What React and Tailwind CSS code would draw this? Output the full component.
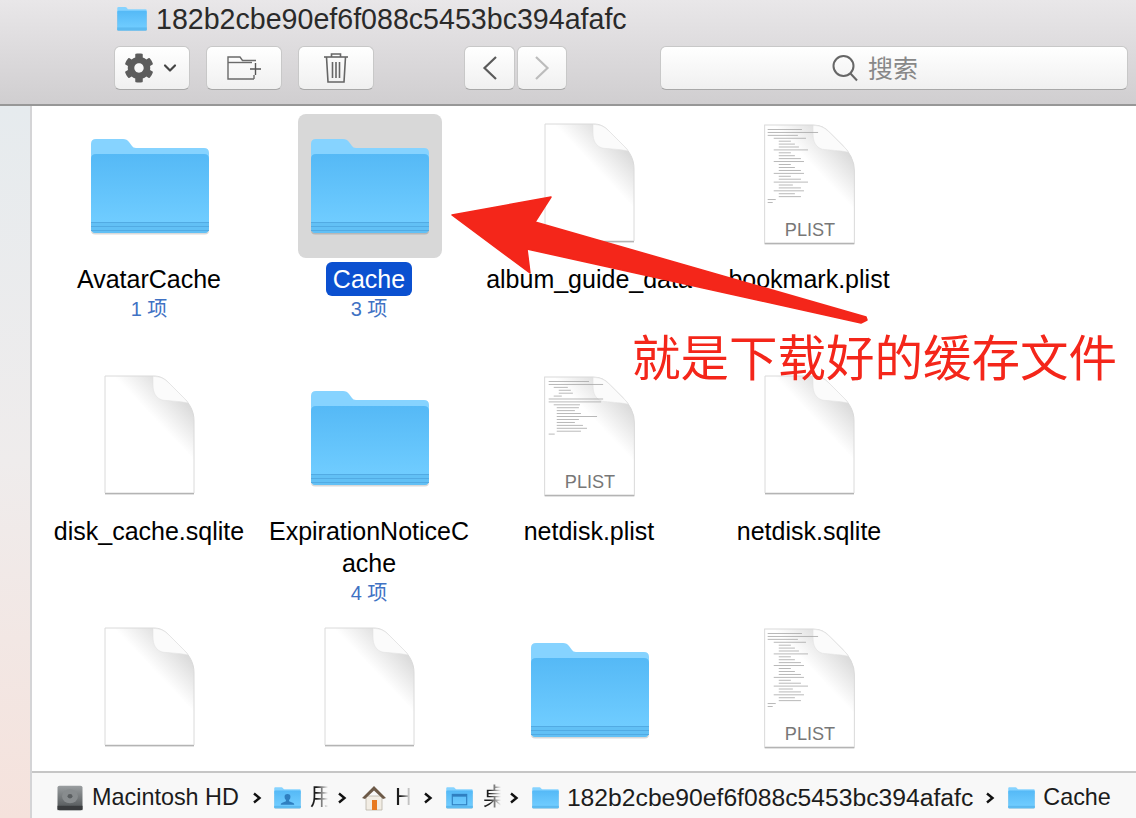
import { ChevronDown } from "lucide-react";
import { FaCog } from "react-icons/fa";

const font = { fontFamily: '"Liberation Sans", "Noto Sans CJK SC", sans-serif' };

const items = [
  { type: "folder", label: "AvatarCache", count: "1 项" },
  { type: "folder", label: "Cache", count: "3 项", selected: true },
  { type: "file", label: "album_guide_data" },
  { type: "plist", label: "bookmark.plist", pattern: 0 },
  { type: "file", label: "disk_cache.sqlite" },
  { type: "folder", label: "ExpirationNoticeCache", count: "4 项" },
  { type: "plist", label: "netdisk.plist", pattern: 1 },
  { type: "file", label: "netdisk.sqlite" },
  { type: "file", label: "" },
  { type: "file", label: "" },
  { type: "folder", label: "" },
  { type: "plist", label: "", pattern: 0 },
];

function FolderIcon({ width = 120, height = 96, glyph }) {
  return (
    <svg width={width} height={height} viewBox="0 0 120 96" className="block shrink-0">
      <defs>
        <linearGradient id="folderFront" x1="0" y1="0" x2="0" y2="1">
          <stop offset="0" stopColor="#55b9f6" />
          <stop offset="0.85" stopColor="#6fccff" />
        </linearGradient>
      </defs>
      <rect x="1" y="30" width="118" height="65.500" rx="4" fill="#000" opacity="0.15" />
      <path d="M1 5 Q1 0 6 0 H33 Q37 0 39 3 L42 7 Q43 9 46 9 H114 Q119 9 119 14 V30 H1 Z" fill="#86d3ff" />
      <path d="M1 20 Q1 15 6 15 H114 Q119 15 119 20 V89 Q119 94 114 94 H6 Q1 94 1 89 Z" fill="url(#folderFront)" />
      <path d="M1 83 H119 V89 Q119 94 114 94 H6 Q1 94 1 89 Z" fill="#62c0f5" />
      <rect x="1" y="83" width="118" height="1" fill="#52abe3" />
      <rect x="1" y="87" width="118" height="1" fill="#52abe3" />
      <rect x="1" y="91" width="118" height="1" fill="#52abe3" />
      {glyph === "user" && (
        <path d="M60 30 a13 13 0 0 1 13 14 q0 9 -6 13 v5 l19 8 q4 2 4 8 H30 q0 -6 4 -8 l19 -8 v-5 q-6 -4 -6 -13 a13 13 0 0 1 13 -14 Z" fill="#2f7fc0" />
      )}
      {glyph === "desktop" && (
        <>
          <rect x="28" y="32" width="64" height="46" fill="none" stroke="#2f7fc0" strokeWidth="5" />
          <rect x="28" y="32" width="64" height="10" fill="#2f7fc0" />
        </>
      )}
    </svg>
  );
}

const plistLines = [
  [[4, 34], [4, 50], [4, 30], [10, 32], [15, 12], [15, 16], [15, 20], [10, 34], [15, 12], [15, 16], [15, 22], [10, 30], [15, 12], [15, 16], [15, 22], [10, 30], [15, 12], [15, 22], [10, 34], [15, 14], [15, 22], [10, 30], [15, 16], [15, 22], [4, 8], [4, 5]],
  [[5, 40], [5, 54], [10, 14], [15, 12], [15, 14], [10, 8], [5, 54], [5, 52], [10, 26], [13, 22], [13, 18], [13, 24], [13, 40], [13, 22], [13, 18], [13, 26], [13, 30], [13, 24], [5, 6]],
];

function FileIcon({ plist, pattern = 0 }) {
  return (
    <svg width={plist ? 96 : 94} height={plist ? 123 : 122} viewBox="-2 -1 94 122" className="block">
      <defs>
        <linearGradient id="pageShade" x1="0.8" y1="0.15" x2="0.6" y2="0.4">
          <stop offset="0" stopColor="#dcdcdc" />
          <stop offset="1" stopColor="#ffffff" />
        </linearGradient>
      </defs>
      <path
        d="M1 1 H49 C56 1 60 3 66 9 L78 21 C86 29 90 36 90 46 V118 H1 Z"
        fill="url(#pageShade)"
        stroke="#dadada"
        strokeWidth="1"
      />
      <rect x="1" y="118" width="89" height="1.400" fill="#b4b4b4" />
      <path d="M49 1.500 C56 1.500 60 3 66 9 L78 21 C81 24 83 26 84 28 C75 26 64 26 58 25 C52 23 49 18 49 10 Z" fill="#fbfbfb" stroke="#e2e2e2" strokeWidth="0.600" />
      {plist && (
        <>
          {plistLines[pattern].map(([x, len], i) => (
            <rect key={i} x={x} y={5 + i * 2.900} width={len} height="0.800" fill="#a8a8a8" />
          ))}
          <text x="46" y="111" textAnchor="middle" fontSize="18" fill="#777" style={font}>PLIST</text>
        </>
      )}
    </svg>
  );
}

function GridItem({ item }) {
  return (
    <div className="h-[252px] w-[220px] flex flex-col items-center">
      <div className={`w-[144px] h-[144px] flex items-center justify-center rounded-lg ${item.selected ? "bg-[#d8d8d8]" : ""}`}>
        {item.type === "folder" && <div className="pt-[2px]"><FolderIcon /></div>}
        {item.type === "file" && <div className="pb-[6px] pr-[2px]"><FileIcon /></div>}
        {item.type === "plist" && <div className="pb-[4px] pr-[2px]"><FileIcon plist pattern={item.pattern} /></div>}
      </div>
      {item.label && (
        <div className="mt-[4px] w-[210px] flex justify-center text-center pr-[2px]">
          <span className={`text-[25px] leading-[32px] py-px rounded-md break-all ${item.selected ? "bg-[#0b50d0] text-white px-[7px]" : "text-black"}`}>
            {item.label}
          </span>
        </div>
      )}
      {item.count && <div className="text-[20px] leading-[24px] mt-px pr-[2px] text-[#3f72c4]">{item.count}</div>}
    </div>
  );
}

function ToolButton({ className, children }) {
  return (
    <div className={`h-[44px] flex items-center justify-center rounded-md border border-[#c8c8c8] border-b-[#a8a8a8] bg-linear-to-b from-white to-[#f0f0f0] ${className}`}>
      {children}
    </div>
  );
}

function Crumb() {
  return (
    <svg width="10" height="14" viewBox="0 0 10 14" className="shrink-0 block">
      <path d="M2 2.500 L7.500 7 L2 11.500" fill="none" stroke="#111" strokeWidth="2.400" />
    </svg>
  );
}

export default function App() {
  return (
    <div className="w-[1136px] h-[818px] overflow-hidden flex flex-col bg-white" style={font}>
      {/* toolbar */}
      <div className="h-[106px] shrink-0 border-b-2 border-[#979797] bg-linear-to-b from-[#e9e7e9] to-[#d0ced0]">
        <div className="h-[46px] pl-[117px] flex items-center gap-[9px] pb-[8px]">
          <FolderIcon width={30} height={24} />
          <span className="text-[28.600px] text-[#2a2a2a] leading-none">182b2cbe90ef6f088c5453bc394afafc</span>
        </div>
        <div className="flex pl-[114px]">
          <ToolButton className="w-[76px] gap-[6px]">
            <FaCog size={30} color="#5c5c5c" />
            <ChevronDown size={20} strokeWidth={2.600} color="#444" />
          </ToolButton>
          <ToolButton className="w-[76px] ml-[16px]">
            <svg width="36" height="28" viewBox="0 0 36 28" fill="none" stroke="#6a6a6a" strokeWidth="1.400">
              <path d="M28 25 H2 V3 H14 L16.500 6.500 H30" />
              <path d="M2 8.500 H26" />
              <path d="M29.500 9 V21 M24 15 H35" stroke="#555" />
              <path d="M28 21 V25" />
            </svg>
          </ToolButton>
          <ToolButton className="w-[76px] ml-[16px]">
            <svg width="26" height="32" viewBox="0 0 26 32" fill="none" stroke="#666" strokeWidth="1.600">
              <path d="M1 5 H25" />
              <path d="M8.500 5 V2 H17.500 V5" />
              <path d="M3.500 5 L5 30 H21 L22.500 5" />
              <path d="M9.500 10 V26 M13 10 V26 M16.500 10 V26" />
            </svg>
          </ToolButton>
          <ToolButton className="w-[51px] ml-[90px]">
            <svg width="16" height="26" viewBox="0 0 16 26" fill="none" stroke="#5a5a5a" strokeWidth="2.200">
              <path d="M14 2 L2.500 13 L14 24" />
            </svg>
          </ToolButton>
          <ToolButton className="w-[50px] ml-[2px]">
            <svg width="16" height="26" viewBox="0 0 16 26" fill="none" stroke="#bcbcbc" strokeWidth="2.200">
              <path d="M2 2 L13.500 13 L2 24" />
            </svg>
          </ToolButton>
          <ToolButton className="w-[468px] ml-[93px] gap-[10px] pr-[38px]">
            <svg width="26" height="28" viewBox="0 0 26 28" fill="none" stroke="#666" strokeWidth="2">
              <circle cx="11.500" cy="12" r="10" />
              <path d="M18.500 19.500 L25 26.500" />
            </svg>
            <span className="text-[25px] text-[#888] leading-none mt-[2px]">搜索</span>
          </ToolButton>
        </div>
      </div>

      <div className="flex-1 min-h-0 flex relative">
        {/* sidebar strip */}
        <div className="w-[32px] shrink-0 border-r-2 border-[#d4d4d6] bg-linear-to-b from-[#e6ebee] via-[#efecec] to-[#f5e2dc]" />

        <div className="flex-1 min-w-0 flex flex-col">
          {/* icon grid */}
          <div className="flex-1 min-h-0 overflow-hidden pt-[8px] pl-[8px] grid grid-cols-[repeat(4,220px)] content-start">
            {items.map((item, i) => (
              <GridItem key={i} item={item} />
            ))}
          </div>

          {/* path bar */}
          <div className="h-[47px] shrink-0 border-t-2 border-[#c6c6c6] bg-[#f8f8f8] flex items-center pl-[25px] pt-[4px] text-[23.400px] text-[#1c1c1c] whitespace-nowrap">
            <svg width="26" height="26" viewBox="0 0 26 30" preserveAspectRatio="none" className="shrink-0">
              <defs>
                <linearGradient id="hdBody" x1="0" y1="0" x2="0" y2="1">
                  <stop offset="0" stopColor="#9a9ea0" />
                  <stop offset="1" stopColor="#4e5254" />
                </linearGradient>
              </defs>
              <rect x="0.500" y="1" width="25" height="28" rx="2" fill="url(#hdBody)" />
              <rect x="0.500" y="24" width="25" height="5" fill="#3a3c3e" />
              <circle cx="13" cy="13" r="8" fill="#888c8e" />
              <circle cx="13" cy="13" r="2.500" fill="#5a5e60" />
            </svg>
            <span className="ml-[9px]">Macintosh HD</span>
            <span className="ml-[13px]"><Crumb /></span>
            <span className="ml-[12px]"><FolderIcon width={27} height={22} glyph="user" /></span>
            <span className="ml-[9px] w-[18px] [mask-image:linear-gradient(to_right,black_35%,transparent)]">用</span>
            <span className="ml-[9px]"><Crumb /></span>
            <svg width="26" height="27" viewBox="0 0 26 27" className="ml-[14px] shrink-0">
              <path d="M5 12 H21 V26 H5 Z" fill="#f2ede4" stroke="#b9b2a6" strokeWidth="0.800" />
              <rect x="11" y="16" width="5" height="10" fill="#e8791f" />
              <path d="M1 14 L13 2 L25 14 L22 15 L13 6.500 L4 15 Z" fill="#6d5a48" />
            </svg>
            <span className="ml-[8px] w-[16px] [mask-image:linear-gradient(to_right,black_35%,transparent)]">H</span>
            <span className="ml-[12px]"><Crumb /></span>
            <span className="ml-[13px]"><FolderIcon width={27} height={22} glyph="desktop" /></span>
            <span className="ml-[10px] w-[18px] [mask-image:linear-gradient(to_right,black_35%,transparent)]">桌</span>
            <span className="ml-[8px]"><Crumb /></span>
            <span className="ml-[13px]"><FolderIcon width={27} height={22} /></span>
            <span className="ml-[8px] text-[24.700px]">182b2cbe90ef6f088c5453bc394afafc</span>
            <span className="ml-[12px]"><Crumb /></span>
            <span className="ml-[13px]"><FolderIcon width={27} height={22} /></span>
            <span className="ml-[8px]">Cache</span>
          </div>
        </div>

        {/* annotation drawn over the window */}
        <svg width="1136" height="712" viewBox="0 106 1136 712" className="absolute left-0 top-0 pointer-events-none">
          <polygon
            points="452,215 551,197 535,222 866,317 867,320 861,323 527,249 530,273"
            fill="#f4261a"
            stroke="#f4261a"
            strokeWidth="1.500"
            strokeLinejoin="round"
          />
        </svg>
        <div className="absolute left-[632px] top-[223px] text-[48.500px] leading-[60px] text-[#f4261a] whitespace-nowrap">
          就是下载好的缓存文件
        </div>
      </div>
    </div>
  );
}
